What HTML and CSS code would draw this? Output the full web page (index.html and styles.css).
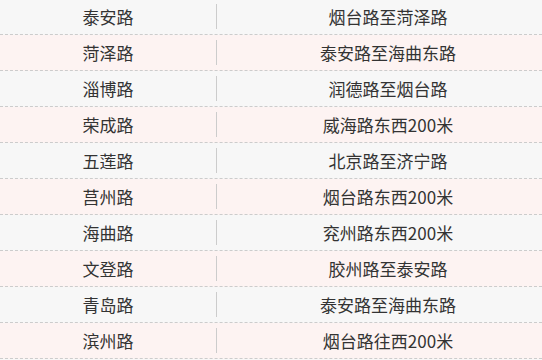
FILE: index.html
```html
<!DOCTYPE html>
<html lang="zh-CN">
<head>
<meta charset="utf-8">
<link rel="stylesheet" href="styles.css">
</head>
<body>
<div class="table">
  <div class="row"><div class="cell name">泰安路</div><div class="cell range">烟台路至菏泽路</div></div>
  <div class="row"><div class="cell name">菏泽路</div><div class="cell range">泰安路至海曲东路</div></div>
  <div class="row"><div class="cell name">淄博路</div><div class="cell range">润德路至烟台路</div></div>
  <div class="row"><div class="cell name">荣成路</div><div class="cell range">威海路东西200米</div></div>
  <div class="row"><div class="cell name">五莲路</div><div class="cell range">北京路至济宁路</div></div>
  <div class="row"><div class="cell name">莒州路</div><div class="cell range">烟台路东西200米</div></div>
  <div class="row"><div class="cell name">海曲路</div><div class="cell range">兖州路东西200米</div></div>
  <div class="row"><div class="cell name">文登路</div><div class="cell range">胶州路至泰安路</div></div>
  <div class="row"><div class="cell name">青岛路</div><div class="cell range">泰安路至海曲东路</div></div>
  <div class="row"><div class="cell name">滨州路</div><div class="cell range">烟台路往西200米</div></div>
</div>
</body>
</html>
```
FILE: styles.css
```css
html, body {
  margin: 0;
  padding: 0;
  background: #f7f7f7;
}
body {
  font-family: "Noto Sans CJK SC", "Noto Sans", sans-serif;
  font-size: 17px;
  color: #333333;
  overflow: hidden;
}
.table {
  margin-top: -1px;
  display: flex;
  flex-direction: column;
}
.row {
  display: flex;
  align-items: center;
  height: 35px;
  border-bottom: 1px dashed #cccccc;
  background: #f7f7f7;
}
.row:nth-child(even) {
  background: #fdf3f2;
}
.cell {
  display: flex;
  align-items: center;
  justify-content: center;
  height: 25px;
  line-height: 25px;
  white-space: nowrap;
}
.name {
  width: 216px;
  flex: none;
  border-right: 1px solid #cccccc;
}
.range {
  flex: 1;
  padding-left: 17px;
}
```
